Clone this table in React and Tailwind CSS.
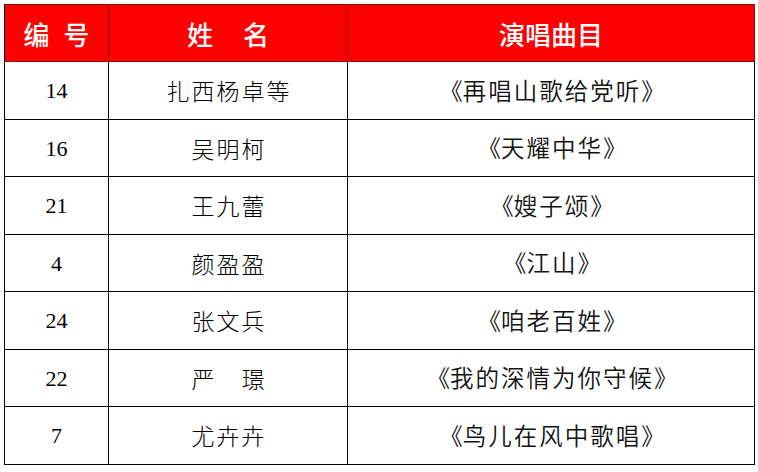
import React from 'react';

const rows = [
  { no: '14', name: '扎西杨卓等', song: '再唱山歌给党听', h: 'h-[58px]' },
  { no: '16', name: '吴明柯', song: '天耀中华', h: 'h-[57px]' },
  { no: '21', name: '王九蕾', song: '嫂子颂', h: 'h-[58px]' },
  { no: '4', name: '颜盈盈', song: '江山', h: 'h-[57px]' },
  { no: '24', name: '张文兵', song: '咱老百姓', h: 'h-[58px]' },
  { no: '22', name: '严　璟', song: '我的深情为你守候', h: 'h-[57px]' },
  { no: '7', name: '尤卉卉', song: '鸟儿在风中歌唱', h: 'h-[58px]' },
];

const cjk = "font-['Noto_Sans_CJK_SC',sans-serif]";

export default function App() {
  return (
    <div className="w-[758px] h-[472px] bg-white pt-[4px] pl-[4px]">
      <div className="w-[751px] border-l border-t border-black">
        {/* header */}
        <div className="grid grid-cols-[104px_239px_407px] h-[58px] bg-[#ff0000] border-t border-[#8b1010] -mt-px">
          <div className={`flex items-center justify-center border-r border-b border-[#8b1010] text-white text-[26px] font-medium ${cjk}`}>
            编<span className="w-[14px]" />号
          </div>
          <div className={`flex items-center justify-center border-r border-b border-[#8b1010] text-white text-[26px] font-medium ${cjk}`}>
            姓<span className="w-[30px]" />名
          </div>
          <div className={`flex items-center justify-center border-r border-b border-[#8b1010] text-white text-[26px] font-medium ${cjk}`}>
            演唱曲目
          </div>
        </div>
        {rows.map((r) => (
          <div key={r.no} className={`grid grid-cols-[104px_239px_407px] ${r.h}`}>
            <div className="flex items-center justify-center border-r border-b border-black text-[22px] text-black font-['Liberation_Serif',serif]">
              {r.no}
            </div>
            <div className={`flex items-center justify-center border-r border-b border-black text-[23px] tracking-[2px] pl-[2px] text-black font-light ${cjk}`}>
              {r.name}
            </div>
            <div className={`flex items-center justify-center border-r border-b border-black text-[23.5px] tracking-[2px] pl-[2px] text-[#111] font-[350] ${cjk}`}>
              <span className="inline-block w-[1em] text-right">《</span>
              <span>{r.song}</span>
              <span className="inline-block w-[1em] text-left">》</span>
            </div>
          </div>
        ))}
      </div>
    </div>
  );
}
